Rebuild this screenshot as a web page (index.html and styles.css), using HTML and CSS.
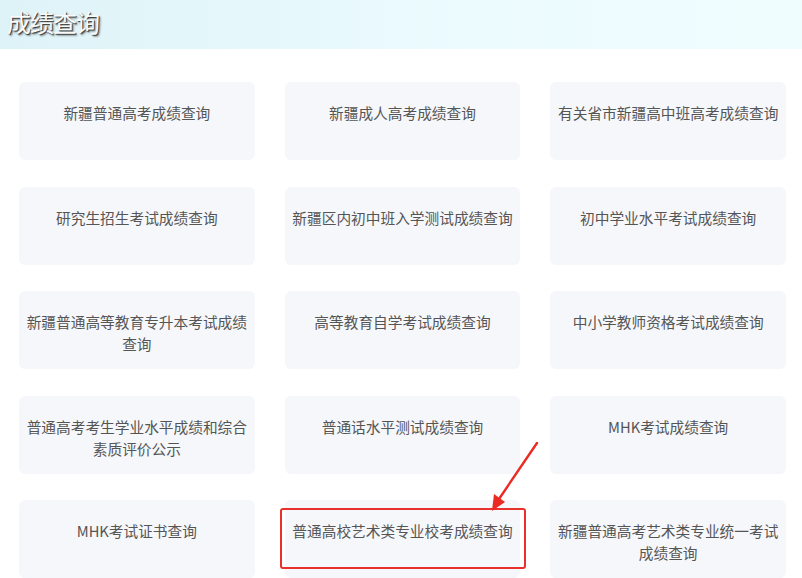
FILE: index.html
```html
<!DOCTYPE html>
<html lang="zh-CN">
<head>
    <meta charset="UTF-8">
    <meta name="viewport" content="width=device-width, initial-scale=1.0">
    <title>成绩查询</title>
    <link rel="stylesheet" href="styles.css">
</head>
<body>
    <div class="header">
        <h1>成绩查询</h1>
    </div>

    <div class="grid">
        <a class="card" href="#">新疆普通高考成绩查询</a>
        <a class="card" href="#">新疆成人高考成绩查询</a>
        <a class="card" href="#">有关省市新疆高中班高考成绩查询</a>
        <a class="card" href="#">研究生招生考试成绩查询</a>
        <a class="card" href="#">新疆区内初中班入学测试成绩查询</a>
        <a class="card" href="#">初中学业水平考试成绩查询</a>
        <a class="card" href="#">新疆普通高等教育专升本考试成绩查询</a>
        <a class="card" href="#">高等教育自学考试成绩查询</a>
        <a class="card" href="#">中小学教师资格考试成绩查询</a>
        <a class="card" href="#">普通高考考生学业水平成绩和综合素质评价公示</a>
        <a class="card" href="#">普通话水平测试成绩查询</a>
        <a class="card" href="#">MHK考试成绩查询</a>
        <a class="card" href="#">MHK考试证书查询</a>
        <a class="card" href="#">普通高校艺术类专业校考成绩查询</a>
        <a class="card" href="#">新疆普通高考艺术类专业统一考试成绩查询</a>
    </div>

    <!-- 标注：红框和箭头 -->
    <div class="mark-box"></div>
    <svg class="mark-arrow" width="60" height="76" viewBox="0 0 60 76">
        <line x1="56" y1="2" x2="18" y2="58" stroke="#ec2a24" stroke-width="2.4" stroke-linecap="round"/>
        <polygon points="11,70 13,53 24,61" fill="#ec2a24"/>
    </svg>
</body>
</html>
```

FILE: styles.css
```css
* {
    box-sizing: border-box;
}
body {
    margin: 0;
    font-family: "Noto Sans CJK SC", "Microsoft YaHei", sans-serif;
    background-color: #fff;
    position: relative;
    height: 578px;
    overflow: hidden;
}
.header {
    height: 49px;
    background: linear-gradient(to right, #def3f8, #ecfbfe 60%, #effdff);
    padding-left: 7px;
}
.header h1 {
    margin: 0;
    font-size: 24px;
    font-weight: normal;
    line-height: 44px;
    color: #fafafa;
    letter-spacing: -1px;
    text-shadow: 1px 1px 1px #333, 2px 2px 2px rgba(0,0,0,0.35);
}
.grid {
    display: grid;
    grid-template-columns: repeat(3, 1fr);
    column-gap: 30px;
    row-gap: 26.5px;
    padding: 33px 16px 0 19px;
}
.card {
    display: block;
    height: 78px;
    padding: 20px 4px 0;
    background-color: #f5f7fa;
    border-radius: 6px;
    color: #555;
    font-size: 14.7px;
    line-height: 22px;
    text-align: center;
    text-decoration: none;
}
.mark-box {
    position: absolute;
    left: 280px;
    top: 508px;
    width: 246px;
    height: 61px;
    border: 2px solid #e8302c;
    border-radius: 3px;
}
.mark-arrow {
    position: absolute;
    left: 481px;
    top: 441px;
}
```
